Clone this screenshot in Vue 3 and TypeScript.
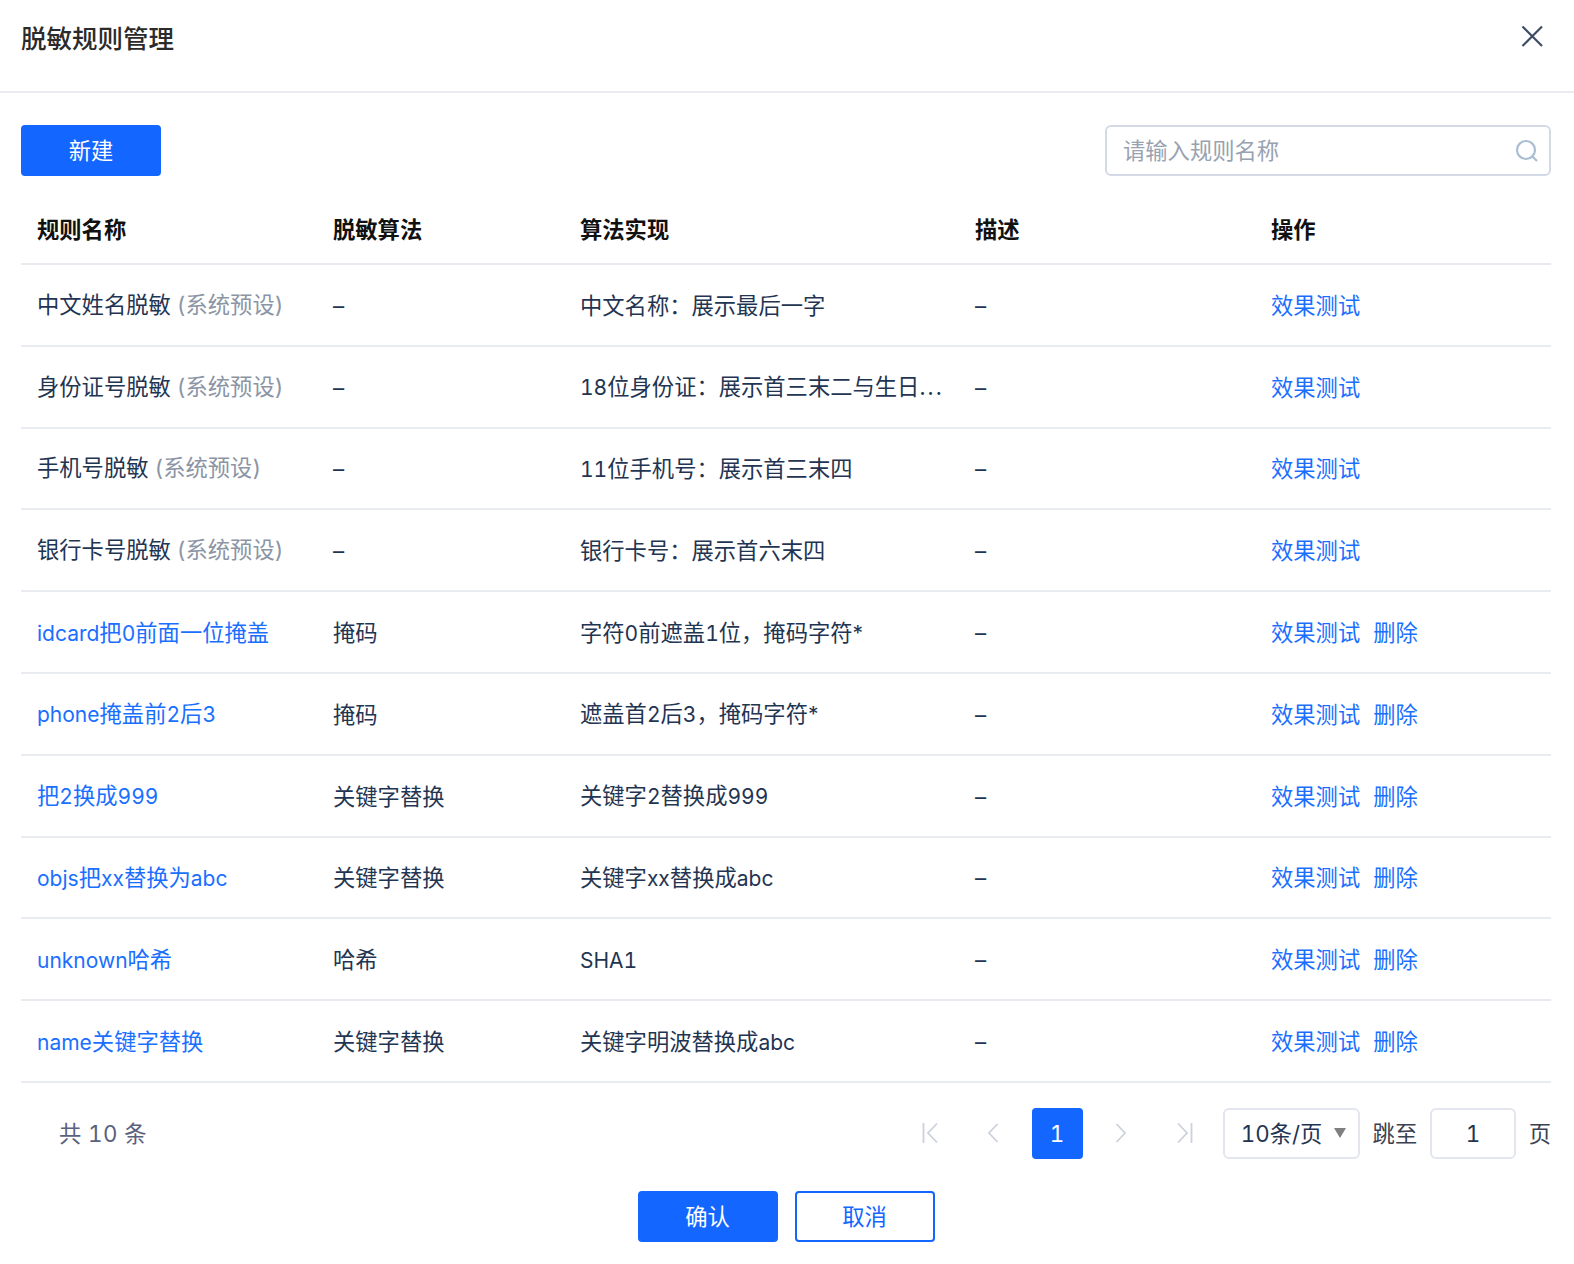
<script setup lang="ts">
interface Row {
  name: string
  preset: boolean
  algo: string
  impl: string
}
interface Seg {
  text: string
  cls: string
}
const rows: Row[] = [
  { name: '中文姓名脱敏', preset: true, algo: '–', impl: '中文名称：展示最后一字' },
  { name: '身份证号脱敏', preset: true, algo: '–', impl: '18位身份证：展示首三末二与生日...' },
  { name: '手机号脱敏', preset: true, algo: '–', impl: '11位手机号：展示首三末四' },
  { name: '银行卡号脱敏', preset: true, algo: '–', impl: '银行卡号：展示首六末四' },
  { name: 'idcard把0前面一位掩盖', preset: false, algo: '掩码', impl: '字符0前遮盖1位，掩码字符*' },
  { name: 'phone掩盖前2后3', preset: false, algo: '掩码', impl: '遮盖首2后3，掩码字符*' },
  { name: '把2换成999', preset: false, algo: '关键字替换', impl: '关键字2替换成999' },
  { name: 'objs把xx替换为abc', preset: false, algo: '关键字替换', impl: '关键字xx替换成abc' },
  { name: 'unknown哈希', preset: false, algo: '哈希', impl: 'SHA1' },
  { name: 'name关键字替换', preset: false, algo: '关键字替换', impl: '关键字明波替换成abc' },
]
function segs(text: string): Seg[] {
  return text
    .split(/([A-Za-z0-9]+|\*|\.+)/)
    .filter((t) => t.length > 0)
    .map((t) => {
      let cls = ''
      if (/^[A-Za-z0-9]+$/.test(t)) cls = 'latin'
      else if (t === '*') cls = 'star'
      else if (t.startsWith('.')) cls = 'dots'
      return { text: t, cls }
    })
}
</script>

<template>
  <div class="dialog">
    <header class="head">
      <h1 class="title">脱敏规则管理</h1>
      <svg class="close" width="24" height="24" viewBox="0 0 24 24" fill="none" stroke="#3d4c63" stroke-width="2.2">
        <path d="M2.5 2.5 L22 22 M22 2.5 L2.5 22" />
      </svg>
    </header>
    <div class="body">
      <div class="toolbar">
        <button class="btn primary">新建</button>
        <div class="search">
          <span class="placeholder">请输入规则名称</span>
          <svg width="24" height="24" viewBox="0 0 24 24" fill="none" stroke="#a9bdd3" stroke-width="2.2">
            <circle cx="11" cy="11" r="9" />
            <path d="M17.5 17.5 L22 22" />
          </svg>
        </div>
      </div>
      <div class="table">
        <div class="row thead">
          <div class="cell">规则名称</div>
          <div class="cell">脱敏算法</div>
          <div class="cell">算法实现</div>
          <div class="cell">描述</div>
          <div class="cell">操作</div>
        </div>
        <div v-for="r in rows" :key="r.name" class="row">
          <div v-if="r.preset" class="cell preset">{{ r.name }} <span class="muted">(系统预设)</span></div>
          <div v-else class="cell">
            <a class="link"><span v-for="(s, i) in segs(r.name)" :key="i" :class="s.cls">{{ s.text }}</span></a>
          </div>
          <div class="cell">{{ r.algo }}</div>
          <div class="cell"><span v-for="(s, i) in segs(r.impl)" :key="i" :class="s.cls">{{ s.text }}</span></div>
          <div class="cell">–</div>
          <div class="cell ops">
            <a class="link">效果测试</a>
            <a v-if="!r.preset" class="link">删除</a>
          </div>
        </div>
      </div>
      <div class="pager">
        <span class="total">共 10 条</span>
        <div class="pages">
          <span class="slot">
            <svg width="24" height="24" viewBox="0 0 24 24" fill="none" stroke="#ccd1dc" stroke-width="1.8">
              <path d="M5.5 2 V22 M19 2.5 L10 12 L19 21.5" />
            </svg>
          </span>
          <span class="slot">
            <svg width="24" height="24" viewBox="0 0 24 24" fill="none" stroke="#ccd1dc" stroke-width="1.8">
              <path d="M16.5 3 L8 12 L16.5 21" />
            </svg>
          </span>
          <span class="slot current">1</span>
          <span class="slot">
            <svg width="24" height="24" viewBox="0 0 24 24" fill="none" stroke="#ccd1dc" stroke-width="1.8">
              <path d="M7.5 3 L16 12 L7.5 21" />
            </svg>
          </span>
          <span class="slot">
            <svg width="24" height="24" viewBox="0 0 24 24" fill="none" stroke="#ccd1dc" stroke-width="1.8">
              <path d="M5 2.5 L14 12 L5 21.5 M18.5 2 V22" />
            </svg>
          </span>
          <div class="size">
            <span>10条/页</span>
            <i class="caret"></i>
          </div>
          <span class="jump">跳至</span>
          <div class="jump-input">1</div>
          <span class="jump">页</span>
        </div>
      </div>
      <div class="footer">
        <button class="btn primary">确认</button>
        <button class="btn outline">取消</button>
      </div>
    </div>
  </div>
</template>

<style scoped>
.dialog {
  width: 1574px;
  height: 1264px;
  background: #fff;
  font-family: Inter, "Noto Sans CJK SC", sans-serif;
  font-size: 22.3px;
  font-variant-numeric: tabular-nums;
  color: #1f3552;
}
.head {
  height: 93px;
  box-sizing: border-box;
  border-bottom: 2px solid #e9ebee;
  padding: 0 30px 0 21px;
  display: flex;
  justify-content: space-between;
  align-items: flex-start;
}
.title {
  margin: 21px 0 0;
  font-size: 25.5px;
  line-height: 36px;
  font-weight: 500;
  color: #2b2b2b;
}
.close {
  margin-top: 24px;
}
.body {
  padding: 32px 23px 0 21px;
}
.toolbar {
  display: flex;
  justify-content: space-between;
  align-items: center;
  height: 51px;
}
.btn {
  width: 140px;
  height: 51px;
  border-radius: 4px;
  font: inherit;
  line-height: 32px;
  padding: 0;
}
.primary {
  background: #1366ff;
  border: 0;
  color: #fff;
}
.outline {
  background: #fff;
  border: 2px solid #1366ff;
  color: #1366ff;
}
.search {
  width: 446px;
  height: 51px;
  box-sizing: border-box;
  border: 2px solid #d4dae5;
  border-radius: 6px;
  padding: 0 10px 0 16px;
  display: flex;
  align-items: center;
  justify-content: space-between;
}
.placeholder {
  color: #98a2b1;
  line-height: 32px;
}
.table {
  margin-top: 18px;
}
.row {
  display: grid;
  grid-template-columns: 296px 247px 395px 296px 296px;
  height: 81.8px;
  box-sizing: border-box;
  border-bottom: 2px solid #e8ecf1;
  align-items: center;
}
.thead {
  height: 71px;
  font-weight: 700;
  color: #111;
}
.cell {
  padding: 2px 16px 0;
  white-space: nowrap;
  line-height: 32px;
}
.preset {
  padding-top: 0;
}
.latin {
  font-size: 21px;
}
.star {
  font-size: 21px;
  font-variant-numeric: normal;
}
.dots {
  letter-spacing: 2.2px;
}
.muted {
  color: #8b95a5;
}
.link {
  color: #1a6fff;
}
.ops {
  display: flex;
  gap: 13px;
}
.pager {
  display: flex;
  justify-content: space-between;
  align-items: center;
  margin-top: 25px;
  height: 51px;
  line-height: 32px;
}
.total {
  margin-left: 38px;
  padding-top: 2px;
  color: #59617d;
  letter-spacing: 0.4px;
}
.pages {
  display: flex;
  align-items: center;
  gap: 12.75px;
}
.slot {
  width: 51px;
  height: 51px;
  display: flex;
  align-items: center;
  justify-content: center;
}
.current {
  box-sizing: border-box;
  padding-top: 2px;
  border-radius: 4px;
  background: #1366ff;
  color: #fff;
}
.size {
  width: 137px;
  height: 51px;
  box-sizing: border-box;
  border: 2px solid #e3e6ee;
  border-radius: 6px;
  padding: 2px 12px 0 16px;
  display: flex;
  align-items: center;
  justify-content: space-between;
}
.caret {
  width: 0;
  height: 0;
  margin-top: -2px;
  border-left: 6px solid transparent;
  border-right: 6px solid transparent;
  border-top: 10px solid #808080;
}
.jump {
  padding-top: 2px;
  color: #3a4150;
}
.jump-input {
  width: 86px;
  height: 51px;
  box-sizing: border-box;
  border: 2px solid #e3e6ee;
  border-radius: 6px;
  padding-top: 2px;
  display: flex;
  align-items: center;
  justify-content: center;
}
.footer {
  margin-top: 32px;
  display: flex;
  justify-content: center;
  gap: 17px;
}
.footer .btn {
  padding-top: 2px;
}
</style>

<style>
html, body { background: #fff; }
</style>
